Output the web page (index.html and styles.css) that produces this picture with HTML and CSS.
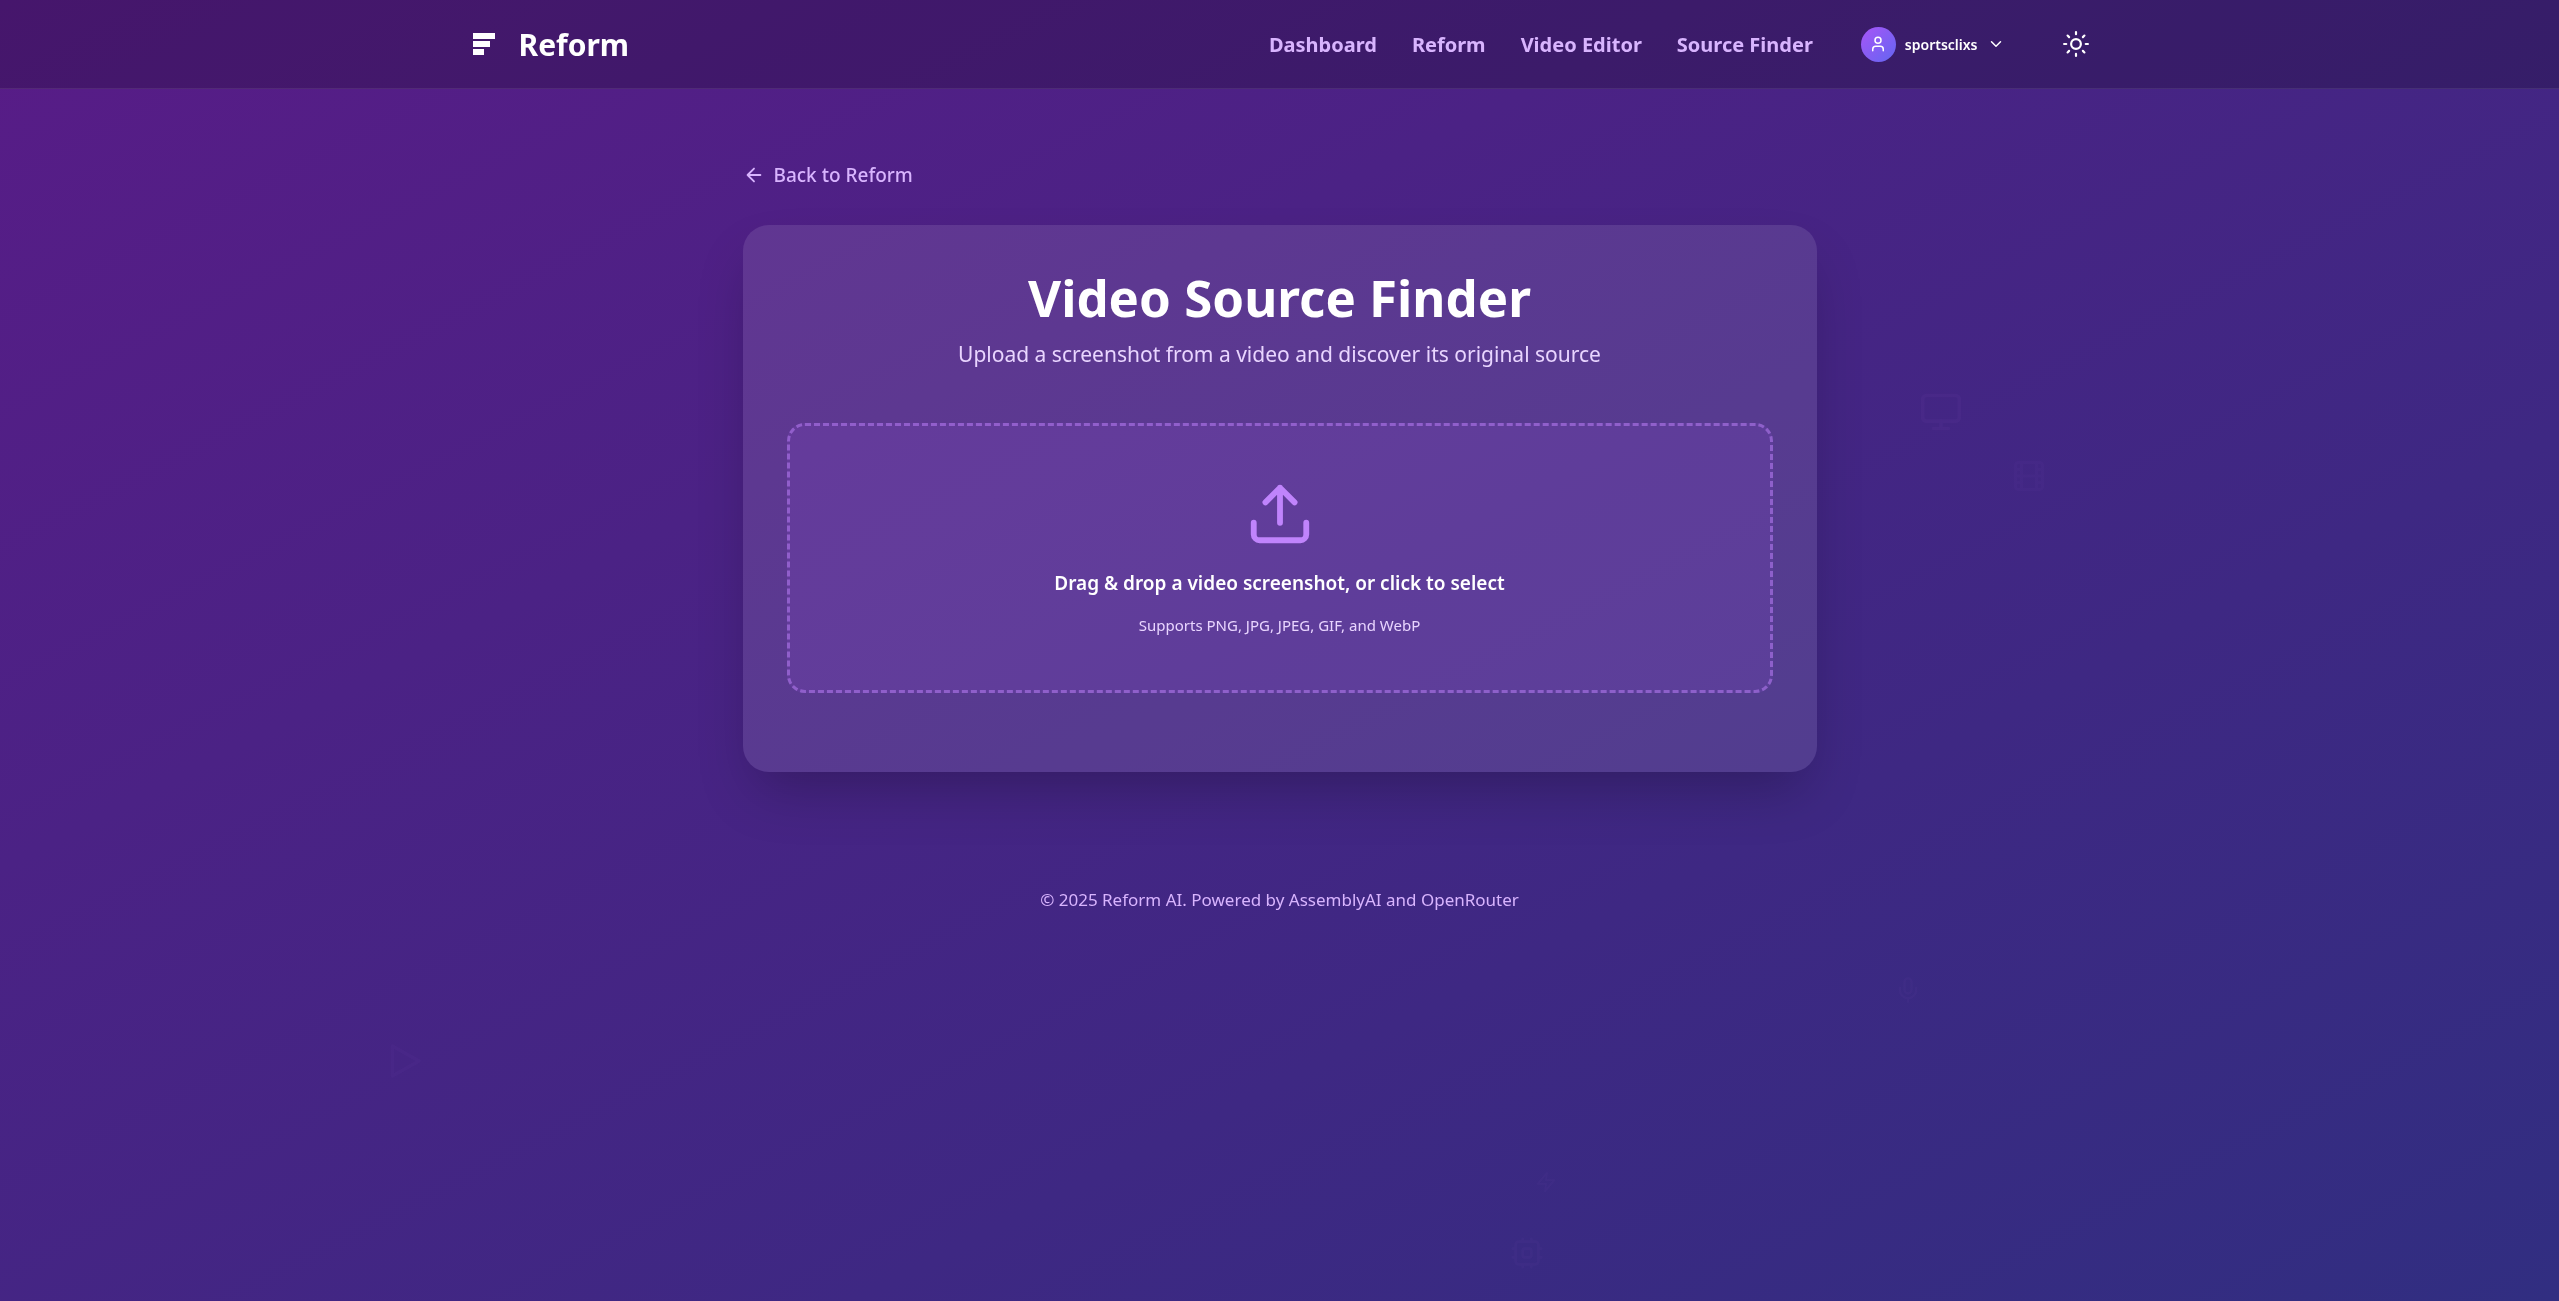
FILE: index.html
```html
<!DOCTYPE html>
<html lang="en">
<head>
  <meta charset="UTF-8" />
  <meta name="viewport" content="width=device-width, initial-scale=1.0"/>
  <title>Video Source Finder - Reform</title>
  <link rel="stylesheet" href="styles.css">
</head>
<body>

  <!-- Floating background icons -->
  <div class="floating-icons" aria-hidden="true">
    <svg class="float-icon float-monitor" viewBox="0 0 24 24"><rect x="2" y="3" width="20" height="14" rx="2"/><path d="M8 21h8M12 17v4"/></svg>
    <svg class="float-icon float-film" viewBox="0 0 24 24"><rect x="3" y="3" width="18" height="18" rx="2"/><path d="M7 3v18M17 3v18M3 7.5h4M3 12h18M3 16.5h4M17 7.5h4M17 16.5h4"/></svg>
    <svg class="float-icon float-play" viewBox="0 0 24 24"><path d="M5 3l16 9-16 9z"/></svg>
    <svg class="float-icon float-mic" viewBox="0 0 24 24"><path d="M12 2a3 3 0 0 0-3 3v7a3 3 0 0 0 6 0V5a3 3 0 0 0-3-3zM19 10v2a7 7 0 0 1-14 0v-2M12 19v3"/></svg>
    <svg class="float-icon float-zap" viewBox="0 0 24 24"><path d="M13 2 3 14h9l-1 8 10-12h-9z"/></svg>
    <svg class="float-icon float-cpu" viewBox="0 0 24 24"><rect x="4" y="4" width="16" height="16" rx="2"/><rect x="9" y="9" width="6" height="6" rx="1"/><path d="M9 2v2M15 2v2M9 20v2M15 20v2M2 9h2M2 15h2M20 9h2M20 15h2"/></svg>
  </div>

  <header class="header">
    <div class="header-inner">
      <a class="logo" href="#">
        <svg class="logo-icon" viewBox="0 0 22 22"><path d="M0 0h22v6H0zM0 8h17v6H0zM0 16h11v6H0z"/></svg>
        <span>Reform</span>
      </a>
      <div class="header-right">
        <nav class="nav">
          <a href="#">Dashboard</a>
          <a href="#">Reform</a>
          <a href="#">Video Editor</a>
          <a href="#">Source Finder</a>
        </nav>
        <button class="user-menu" type="button">
          <span class="avatar">
            <svg class="icon" viewBox="0 0 24 24"><circle cx="12" cy="7" r="4"/><path d="M19 21v-2a4 4 0 0 0-4-4H9a4 4 0 0 0-4 4v2"/></svg>
          </span>
          <span>sportsclixs</span>
          <svg class="icon chevron" viewBox="0 0 24 24"><path d="m6 9 6 6 6-6"/></svg>
        </button>
        <button class="theme-toggle" type="button" aria-label="Toggle theme">
          <svg class="icon" viewBox="0 0 24 24"><circle cx="12" cy="12" r="4.5"/><path d="M12 1v2M12 21v2M4.220 4.220l1.420 1.420M18.360 18.360l1.420 1.420M1 12h2M21 12h2M4.220 19.780l1.420-1.420M18.360 5.640l1.420-1.420"/></svg>
        </button>
      </div>
    </div>
  </header>

  <main class="container">
    <a class="back-link" href="#">
      <svg class="icon" viewBox="0 0 24 24"><path d="m12 19-7-7 7-7M19 12H5"/></svg>
      Back to Reform
    </a>

    <section class="card">
      <h1>Video Source Finder</h1>
      <p class="subtitle">Upload a screenshot from a video and discover its original source</p>

      <button class="dropzone" type="button">
        <svg class="icon" viewBox="0 0 24 24"><path d="M21 15v4a2 2 0 0 1-2 2H5a2 2 0 0 1-2-2v-4M17 8l-5-5-5 5M12 3v12"/></svg>
        <span class="dropzone-title">Drag &amp; drop a video screenshot, or click to select</span>
        <span class="dropzone-hint">Supports PNG, JPG, JPEG, GIF, and WebP</span>
      </button>
    </section>
  </main>

  <footer class="footer">© 2025 Reform AI. Powered by AssemblyAI and OpenRouter</footer>

</body>
</html>
```
FILE: styles.css
```css
* {
  box-sizing: border-box;
}
body {
  margin: 0;
  min-height: 100vh;
  font-family: "Noto Sans", "Open Sans", sans-serif;
  color: #fff;
  background: linear-gradient(to bottom right, #581c87, #312e81);
}
a {
  color: inherit;
  text-decoration: none;
}
button {
  font: inherit;
  color: inherit;
  background: none;
  border: none;
  padding: 0;
  cursor: pointer;
}
.icon {
  display: block;
  flex: none;
  fill: none;
  stroke: currentColor;
  stroke-width: 2;
  stroke-linecap: round;
  stroke-linejoin: round;
}

/* Background icons */
.floating-icons {
  position: fixed;
  inset: 0;
  pointer-events: none;
}
.float-icon {
  position: absolute;
  fill: none;
  stroke: #c084fc;
  stroke-width: 2;
  stroke-linecap: round;
  stroke-linejoin: round;
  opacity: 0.03;
}
.float-monitor {
  width: 44px;
  left: 75%;
  top: 30%;
  opacity: 0.04;
}
.float-film {
  width: 36px;
  left: 78.6%;
  top: 35.2%;
}
.float-play {
  width: 40px;
  left: 15%;
  top: 80%;
}
.float-mic {
  width: 28px;
  left: 74%;
  top: 75%;
}
.float-zap {
  width: 22px;
  left: 60%;
  top: 90%;
}
.float-cpu {
  width: 34px;
  left: 59%;
  top: 95%;
}

/* Header */
.header {
  position: relative;
  background: rgba(0, 0, 0, 0.2);
  border-bottom: 1px solid rgba(255, 255, 255, 0.08);
}
.header-inner {
  display: flex;
  align-items: center;
  justify-content: space-between;
  max-width: 1656px;
  height: 88px;
  margin: 0 auto;
  padding: 0 19px 0 21px;
}
.logo {
  display: flex;
  align-items: center;
  gap: 24px;
  font-size: 30px;
  font-weight: bold;
}
.logo-icon {
  width: 22px;
  fill: #fff;
}
.header-right {
  display: flex;
  align-items: center;
}
.nav {
  display: flex;
  gap: 35px;
  font-size: 20px;
  font-weight: bold;
  color: #d8b4fe;
}
.user-menu {
  display: flex;
  align-items: center;
  gap: 9px;
  margin-left: 48px;
  font-size: 14px;
  font-weight: 600;
}
.avatar {
  display: flex;
  align-items: center;
  justify-content: center;
  width: 35px;
  height: 35px;
  border-radius: 50%;
  background: linear-gradient(to bottom right, #a855f7, #6366f1);
}
.avatar .icon {
  width: 18px;
}
.chevron {
  width: 18px;
}
.theme-toggle {
  margin-left: 58px;
}
.theme-toggle .icon {
  width: 26px;
}

/* Content */
.container {
  position: relative;
  max-width: 1074px;
  margin: 0 auto;
  padding-top: 70px;
}
.back-link {
  display: inline-flex;
  align-items: center;
  gap: 9px;
  font-size: 19px;
  font-weight: 500;
  line-height: 32px;
  color: #d8b4fe;
}
.back-link .icon {
  width: 22px;
}
.card {
  margin-top: 34px;
  padding: 42px 44px 79px;
  border-radius: 26px;
  background: rgba(255, 255, 255, 0.1);
  box-shadow: 0 28px 55px -13px rgba(0, 0, 0, 0.25);
  text-align: center;
}
h1 {
  margin: 0;
  font-size: 51px;
  line-height: 60px;
  font-weight: bold;
}
.subtitle {
  margin: 11px 0 53px;
  font-size: 21px;
  line-height: 32px;
  color: #e9d5ff;
}
.dropzone {
  display: flex;
  flex-direction: column;
  align-items: center;
  width: 100%;
  padding: 53px 40px;
  border: 3px dashed rgba(192, 132, 252, 0.5);
  border-radius: 18px;
  background: rgba(168, 85, 247, 0.1);
}
.dropzone .icon {
  width: 70px;
  color: #c084fc;
}
.dropzone-title {
  margin-top: 18px;
  font-size: 19px;
  line-height: 32px;
  font-weight: 600;
}
.dropzone-hint {
  margin-top: 14px;
  font-size: 15px;
  line-height: 24px;
  color: #e9d5ff;
}
.footer {
  position: relative;
  margin-top: 114px;
  padding-bottom: 40px;
  font-size: 17px;
  line-height: 28px;
  text-align: center;
  color: #d8b4fe;
}
```
